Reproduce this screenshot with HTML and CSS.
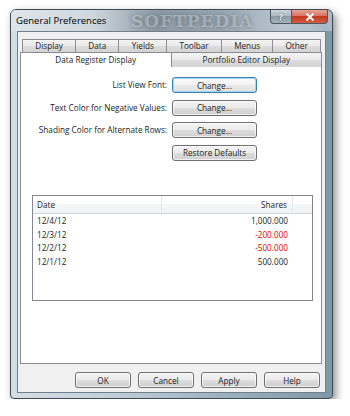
FILE: index.html
```html
<!DOCTYPE html>
<html lang="en">
<head>
    <meta charset="UTF-8">
    <meta name="viewport" content="width=device-width, initial-scale=1.0">
    <title>General Preferences</title>
    <link rel="stylesheet" href="styles.css">
</head>
<body>
    <div class="window">
        <div class="titlebar">
            <span class="title">General Preferences</span>
            <span class="watermark">SOFTPEDIA</span>
            <div class="caption-btns">
                <span class="cap help">?</span>
                <span class="cap close">
                    <svg width="10" height="8" viewBox="0 0 10 8">
                        <path d="M1.5 0.5 L8.5 7.5 M8.5 0.5 L1.5 7.5" stroke="#fff" stroke-width="2" fill="none"/>
                    </svg>
                </span>
            </div>
        </div>

        <div class="client">
            <div class="tab-row back">
                <span class="tab">Display</span>
                <span class="tab">Data</span>
                <span class="tab">Yields</span>
                <span class="tab">Toolbar</span>
                <span class="tab">Menus</span>
                <span class="tab">Other</span>
            </div>
            <div class="tab-row front">
                <span class="tab selected">Data Register Display</span>
                <span class="tab">Portfolio Editor Display</span>
            </div>

            <div class="panel">
                <div class="settings">
                    <span class="label">List View Font:</span>
                    <button class="btn focus">Change...</button>
                    <span class="label">Text Color for Negative Values:</span>
                    <button class="btn">Change...</button>
                    <span class="label">Shading Color for Alternate Rows:</span>
                    <button class="btn">Change...</button>
                    <span class="label"></span>
                    <button class="btn">Restore Defaults</button>
                </div>

                <div class="listview">
                    <div class="lv-header">
                        <span class="col-date">Date</span>
                        <span class="col-shares">Shares</span>
                        <span class="col-fill"></span>
                    </div>
                    <div class="lv-row">
                        <span class="col-date">12/4/12</span>
                        <span class="col-shares">1,000.000</span>
                    </div>
                    <div class="lv-row negative">
                        <span class="col-date">12/3/12</span>
                        <span class="col-shares">-200.000</span>
                    </div>
                    <div class="lv-row negative">
                        <span class="col-date">12/2/12</span>
                        <span class="col-shares">-500.000</span>
                    </div>
                    <div class="lv-row">
                        <span class="col-date">12/1/12</span>
                        <span class="col-shares">500.000</span>
                    </div>
                </div>
            </div>

            <div class="footer">
                <button class="btn">OK</button>
                <button class="btn">Cancel</button>
                <button class="btn">Apply</button>
                <button class="btn">Help</button>
            </div>
        </div>
    </div>
</body>
</html>
```

FILE: styles.css
```css
* {
    margin: 0;
    padding: 0;
    box-sizing: border-box;
}
body {
    background: #fff;
    font-family: "Open Sans", "Noto Sans", sans-serif;
    font-size: 8.2px;
    color: #222;
}
.window {
    margin: 9px 0 0 10px;
    width: 323px;
    height: 390px;
    border: 1px solid #3f4a52;
    border-radius: 6px 6px 4px 4px;
    background: linear-gradient(to right, #d6dee5 0%, #c3cfd9 30%, #9fb2bf 65%, #7f97a6 100%);
    box-shadow: 3px 4px 9px rgba(0, 0, 0, 0.45);
    padding-bottom: 5px;
    display: flex;
    flex-direction: column;
}
.titlebar {
    height: 21px;
    display: flex;
    align-items: center;
    padding: 0 4px 0 5px;
    position: relative;
    border-radius: 5px 5px 0 0;
    background: linear-gradient(to right, #dfe5ea 0%, #cfd8df 25%, #8e9ba5 45%, #9aa7b1 65%, #b8c5cf 85%, #a9b9c5 100%);
}
.title {
    font-size: 9.5px;
    color: #000;
    position: relative;
    z-index: 2;
}
.watermark {
    position: absolute;
    left: 120px;
    top: 1px;
    font-family: "DejaVu Serif", serif;
    font-weight: bold;
    font-size: 17px;
    letter-spacing: 1px;
    color: rgba(235, 240, 244, 0.4);
    text-shadow: 0 0 4px rgba(40, 50, 58, 0.5);
}
.caption-btns {
    margin-left: auto;
    align-self: flex-start;
    display: flex;
}
.cap {
    height: 14px;
    display: flex;
    align-items: center;
    justify-content: center;
    border: 1px solid #4d5a63;
    border-top: none;
}
.help {
    width: 21px;
    border-right: none;
    border-radius: 0 0 0 4px;
    background: linear-gradient(#c9d3da 0%, #aab8c2 50%, #8d9ca7 50%, #a4b3bd 100%);
    color: #fff;
    font-weight: bold;
    font-size: 9px;
    text-shadow: 0 0 2px #333;
}
.close {
    width: 37px;
    border-radius: 0 0 4px 0;
    background: linear-gradient(#e8a193 0%, #d5705d 50%, #c2391f 50%, #d35c44 100%);
}
.client {
    flex: 1;
    margin: 0 6px;
    background: #f0f0f0;
    border: 1px solid #6f7f8b;
    padding: 7px 3px 0 2px;
    display: flex;
    flex-direction: column;
}
.tab-row {
    display: flex;
}
.tab-row.back {
    margin: 0 1px 0 2px;
    height: 13px;
}
.tab-row.front {
    height: 15px;
    position: relative;
    z-index: 1;
    margin-bottom: -1px;
}
.tab {
    flex: 1 1 auto;
    text-align: center;
    border: 1px solid #898c95;
    border-bottom: none;
    border-right: none;
    background: linear-gradient(#f4f4f4 0%, #eaeaea 50%, #dcdcdc 50%, #d4d4d4 100%);
    line-height: 12px;
}
.tab:last-child {
    border-right: 1px solid #898c95;
}
.front .tab {
    flex: 1 1 0;
    line-height: 14px;
}
.tab.selected {
    background: #fff;
}
.panel {
    height: 298px;
    background: #fff;
    border: 1px solid #898c95;
    padding: 10px 0 0 0;
}
.settings {
    display: grid;
    grid-template-columns: 146px 85px;
    column-gap: 5px;
    row-gap: 6.5px;
}
.label {
    text-align: right;
    line-height: 16px;
}
.btn {
    height: 16px;
    border: 1px solid #707070;
    border-radius: 3px;
    background: linear-gradient(#f3f3f3 0%, #ebebeb 50%, #dddddd 50%, #cfcfcf 100%);
    box-shadow: inset 0 0 0 1px rgba(255, 255, 255, 0.7);
    font-family: inherit;
    font-size: 8.2px;
    color: #222;
}
.btn.focus {
    border-color: #3c7fb1;
    background: linear-gradient(#fafafa 0%, #f3f3f3 50%, #e9e9e9 50%, #e2e2e2 100%);
    box-shadow: inset 0 0 0 1px #a7d6f5;
}
.listview {
    margin: 34.5px 0 0 11px;
    width: 281px;
    height: 106px;
    border: 1px solid #828790;
}
.lv-header {
    height: 18px;
    display: grid;
    grid-template-columns: 129px 131px 1fr;
    background: linear-gradient(#ffffff 0%, #ffffff 45%, #f6f7f8 50%, #f1f2f4 100%);
    border-bottom: 1px solid #d5d5d5;
}
.lv-header span {
    line-height: 18px;
    border-right: 1px solid #e3e5e7;
}
.lv-header .col-fill {
    border-right: none;
}
.col-date {
    padding-left: 4px;
}
.col-shares {
    text-align: right;
    padding-right: 5px;
}
.lv-row {
    height: 13.5px;
    display: grid;
    grid-template-columns: 129px 131px;
    line-height: 13.5px;
}
.lv-row.negative .col-shares {
    color: #f20000;
}
.footer {
    margin-top: 8px;
    display: flex;
    justify-content: flex-end;
    gap: 7px;
    padding-right: 2px;
}
.footer .btn {
    width: 56px;
}
```
